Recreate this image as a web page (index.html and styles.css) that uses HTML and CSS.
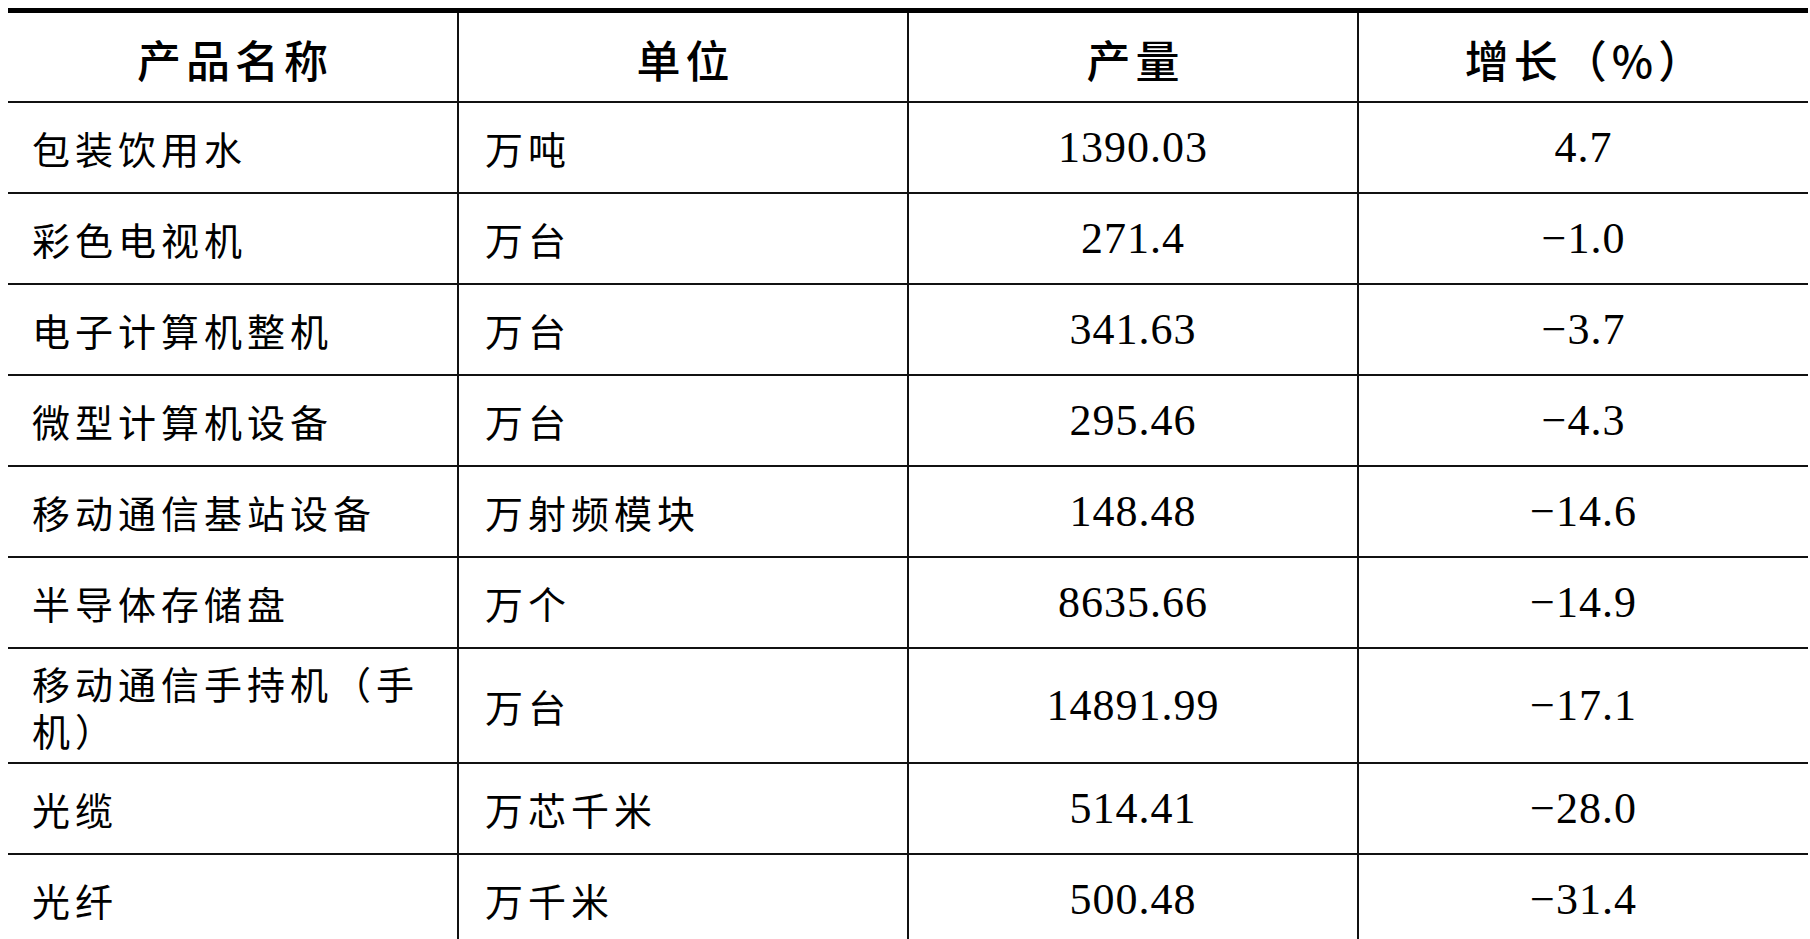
FILE: index.html
```html
<!DOCTYPE html>
<html lang="zh-CN">
<head>
<meta charset="utf-8">
<title>主要工业产品产量</title>
<link rel="stylesheet" href="styles.css">
</head>
<body>
<table class="stats">
  <colgroup>
    <col class="c"><col class="c"><col class="c"><col class="c">
  </colgroup>
  <thead>
    <tr class="head">
      <th>产品名称</th>
      <th>单位</th>
      <th>产量</th>
      <th>增长（%）</th>
    </tr>
  </thead>
  <tbody>
    <tr><td class="name">包装饮用水</td><td class="unit">万吨</td><td class="num">1390.03</td><td class="num">4.7</td></tr>
    <tr><td class="name">彩色电视机</td><td class="unit">万台</td><td class="num">271.4</td><td class="num">−1.0</td></tr>
    <tr><td class="name">电子计算机整机</td><td class="unit">万台</td><td class="num">341.63</td><td class="num">−3.7</td></tr>
    <tr><td class="name">微型计算机设备</td><td class="unit">万台</td><td class="num">295.46</td><td class="num">−4.3</td></tr>
    <tr><td class="name">移动通信基站设备</td><td class="unit">万射频模块</td><td class="num">148.48</td><td class="num">−14.6</td></tr>
    <tr><td class="name">半导体存储盘</td><td class="unit">万个</td><td class="num">8635.66</td><td class="num">−14.9</td></tr>
    <tr class="tall"><td class="name">移动通信手持机（手机）</td><td class="unit">万台</td><td class="num">14891.99</td><td class="num">−17.1</td></tr>
    <tr><td class="name">光缆</td><td class="unit">万芯千米</td><td class="num">514.41</td><td class="num">−28.0</td></tr>
    <tr><td class="name">光纤</td><td class="unit">万千米</td><td class="num">500.48</td><td class="num">−31.4</td></tr>
  </tbody>
</table>
</body>
</html>
```

FILE: styles.css
```css
html, body {
  background: #ffffff;
}

body {
  margin: 8px 0 0 8px;
  overflow: hidden;
}

.stats {
  width: 1800px;
  table-layout: fixed;
  border-collapse: collapse;
  border-top: 5px solid #000;
  color: #000;
}

.stats col.c {
  width: 450px;
}

.stats th,
.stats td {
  border: 2px solid #111;
  padding: 0;
  vertical-align: middle;
}

.stats th:first-child,
.stats td:first-child {
  border-left: none;
}

.stats th:last-child,
.stats td:last-child {
  border-right: none;
}

.stats thead th {
  border-top: none;
}

.head th {
  height: 85px;
  font-family: "Noto Sans CJK SC", sans-serif;
  font-weight: 500;
  font-size: 44px;
  letter-spacing: 5px;
  padding-left: 5px;
  padding-top: 3px;
  text-align: center;
  line-height: 50px;
}

.stats tbody td {
  height: 89px;
}

.stats tbody tr.tall td {
  height: 113px;
}

.name,
.unit {
  font-family: "Noto Sans CJK SC", sans-serif;
  font-weight: 400;
  font-size: 38px;
  letter-spacing: 5px;
  line-height: 45px;
  text-align: left;
  padding: 0 20px 0 24px !important;
}

.tall .name {
  line-height: 47px;
}

.unit {
  padding-left: 26px !important;
}

.num {
  font-family: "Liberation Serif", "Noto Sans CJK SC", serif;
  font-size: 44px;
  letter-spacing: 1px;
  line-height: 45px;
  text-align: center;
}
```
